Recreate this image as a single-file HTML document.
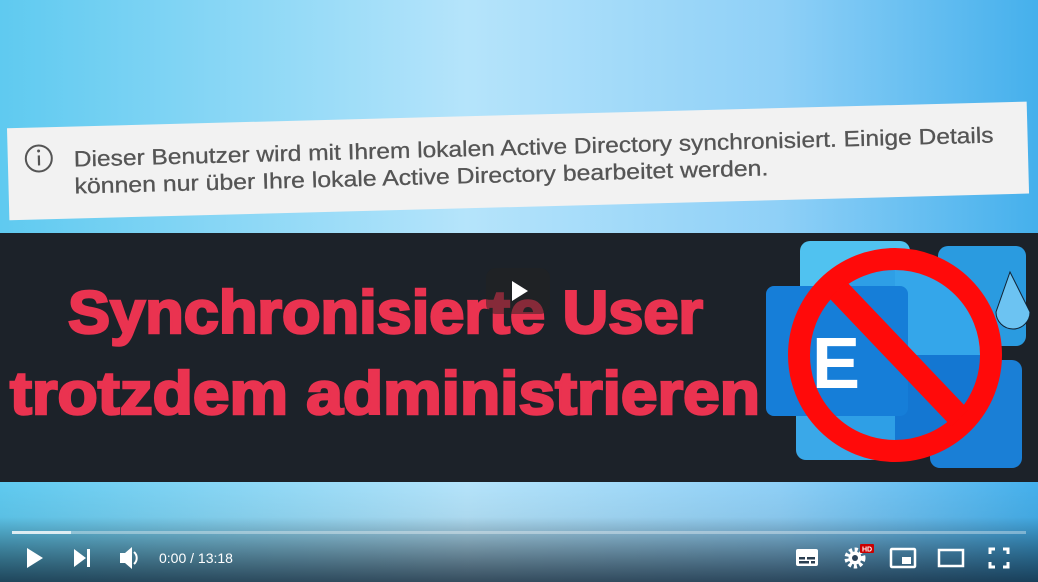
<!DOCTYPE html>
<html><head><meta charset="utf-8"><style>
html,body{margin:0;padding:0;width:1038px;height:582px;overflow:hidden;background:#1c2229;font-family:"Liberation Sans",sans-serif}
svg{display:block}
</style></head><body>
<svg width="1038" height="582" viewBox="0 0 1038 582" xmlns="http://www.w3.org/2000/svg">
<defs>
<linearGradient id="sky" x1="0" y1="0" x2="1" y2="0">
<stop offset="0" stop-color="#5fcaf0"/><stop offset="0.45" stop-color="#b5e4fb"/><stop offset="0.75" stop-color="#8fd0f7"/><stop offset="1" stop-color="#45b0ec"/>
</linearGradient>
<linearGradient id="bot" x1="0" y1="0" x2="0" y2="1">
<stop offset="0" stop-color="#000" stop-opacity="0"/><stop offset="0.35" stop-color="#000" stop-opacity="0.05"/><stop offset="1" stop-color="#0a1a2a" stop-opacity="0.75"/>
</linearGradient>
</defs>
<rect width="1038" height="233" fill="url(#sky)"/>
<rect y="482" width="1038" height="100" fill="url(#sky)"/>
<rect y="482" width="1038" height="100" fill="url(#bot)"/>
<rect y="233" width="1038" height="249" fill="#1c2229"/>
<!-- info bar -->
<g transform="rotate(-1.5 515 160)">
<rect x="8" y="115" width="1020" height="92" fill="#f2f2f2"/>
<circle cx="39" cy="146" r="13" fill="none" stroke="#555" stroke-width="2"/>
<rect x="38" y="143" width="2.2" height="10" fill="#555"/><circle cx="39" cy="138.5" r="1.5" fill="#555"/>
<text x="74" y="155" font-size="22" fill="#555" stroke="#555" stroke-width="0.3" textLength="920" lengthAdjust="spacingAndGlyphs">Dieser Benutzer wird mit Ihrem lokalen Active Directory synchronisiert. Einige Details</text>
<text x="74" y="182" font-size="22" fill="#555" stroke="#555" stroke-width="0.3" textLength="694" lengthAdjust="spacingAndGlyphs">können nur über Ihre lokale Active Directory bearbeitet werden.</text>
</g>
<!-- title -->
<text x="68" y="333" font-size="60" font-weight="bold" fill="#ea3350" stroke="#ea3350" stroke-width="2.5" textLength="635" lengthAdjust="spacingAndGlyphs">Synchronisierte User</text>
<text x="10" y="414" font-size="60" font-weight="bold" fill="#ea3350" stroke="#ea3350" stroke-width="2.5" textLength="750" lengthAdjust="spacingAndGlyphs">trotzdem administrieren</text>
<!-- exchange logo -->
<rect x="800" y="241" width="110" height="110" rx="10" fill="#50c2f0"/>
<rect x="938" y="246" width="88" height="100" rx="10" fill="#2a9be0"/>
<rect x="930" y="360" width="92" height="108" rx="10" fill="#1a7fd6"/>
<rect x="796" y="372" width="120" height="88" rx="10" fill="#3aa8e8"/>
<circle cx="895" cy="355" r="95" fill="#2e9fe6"/>
<path d="M895 260 A95 95 0 0 1 990 355 L895 355 Z" fill="#34a6ea"/>
<path d="M895 355 L990 355 A95 95 0 0 1 895 450 Z" fill="#1477d2"/>
<path d="M1010 272 L996 312 A15 15 0 0 0 1030 312 Z" fill="#6cc3f2" stroke="#123" stroke-width="1"/>
<rect x="766" y="286" width="142" height="130" rx="8" fill="#167ed8"/>
<text x="812" y="388" font-size="72" font-weight="bold" fill="#fff">E</text>
<circle cx="895" cy="355" r="96" fill="none" stroke="#ff0a0a" stroke-width="22"/>
<line x1="838" y1="290" x2="960" y2="418" stroke="#ff0a0a" stroke-width="24"/>
<!-- big play -->
<rect x="486" y="268" width="64" height="46" rx="10" fill="#222" fill-opacity="0.5"/>
<path d="M512 281 L528 291 L512 301 Z" fill="#fff"/>
<!-- progress -->
<rect x="12" y="531" width="1014" height="3" fill="#fff" fill-opacity="0.35"/>
<rect x="12" y="531" width="59" height="3" fill="#fff" fill-opacity="0.7"/>
<!-- controls -->
<path d="M27 548 L43 558 L27 568 Z" fill="#fff"/>
<path d="M74 549 L86 558 L74 567 Z" fill="#fff"/><rect x="87" y="549" width="3" height="18" fill="#fff"/>
<path d="M120 553 h5 l7 -6 v22 l-7 -6 h-5 Z" fill="#fff"/>
<path d="M134 552 a8 8 0 0 1 0 12" fill="none" stroke="#fff" stroke-width="2"/>
<text x="159" y="563" font-size="14" fill="#fff">0:00 / 13:18</text>
<rect x="796" y="549" width="22" height="17" rx="2" fill="#fff"/>
<rect x="799" y="557" width="6" height="2.5" fill="#2a3e50"/><rect x="807" y="557" width="8" height="2.5" fill="#2a3e50"/>
<rect x="799" y="561" width="10" height="2.5" fill="#2a3e50"/><rect x="811" y="561" width="4" height="2.5" fill="#2a3e50"/>
<circle cx="855" cy="558" r="8" fill="none" stroke="#fff" stroke-width="5" stroke-dasharray="3 2.3"/>
<circle cx="855" cy="558" r="6.5" fill="#fff"/><circle cx="855" cy="558" r="3" fill="#2a4258"/>
<rect x="860" y="544" width="14" height="9" rx="1" fill="#c00"/>
<text x="862" y="551.5" font-size="7" font-weight="bold" fill="#fff">HD</text>
<rect x="891" y="549" width="24" height="18" rx="1" fill="none" stroke="#fff" stroke-width="2.5"/>
<rect x="902" y="557" width="9" height="7" fill="#fff"/>
<rect x="939" y="550" width="24" height="16" fill="none" stroke="#fff" stroke-width="2.5"/>
<path d="M990 554 v-5 h5 M1003 549 h5 v5 M1008 562 v5 h-5 M995 567 h-5 v-5" fill="none" stroke="#fff" stroke-width="3"/>
</svg>
</body></html>
